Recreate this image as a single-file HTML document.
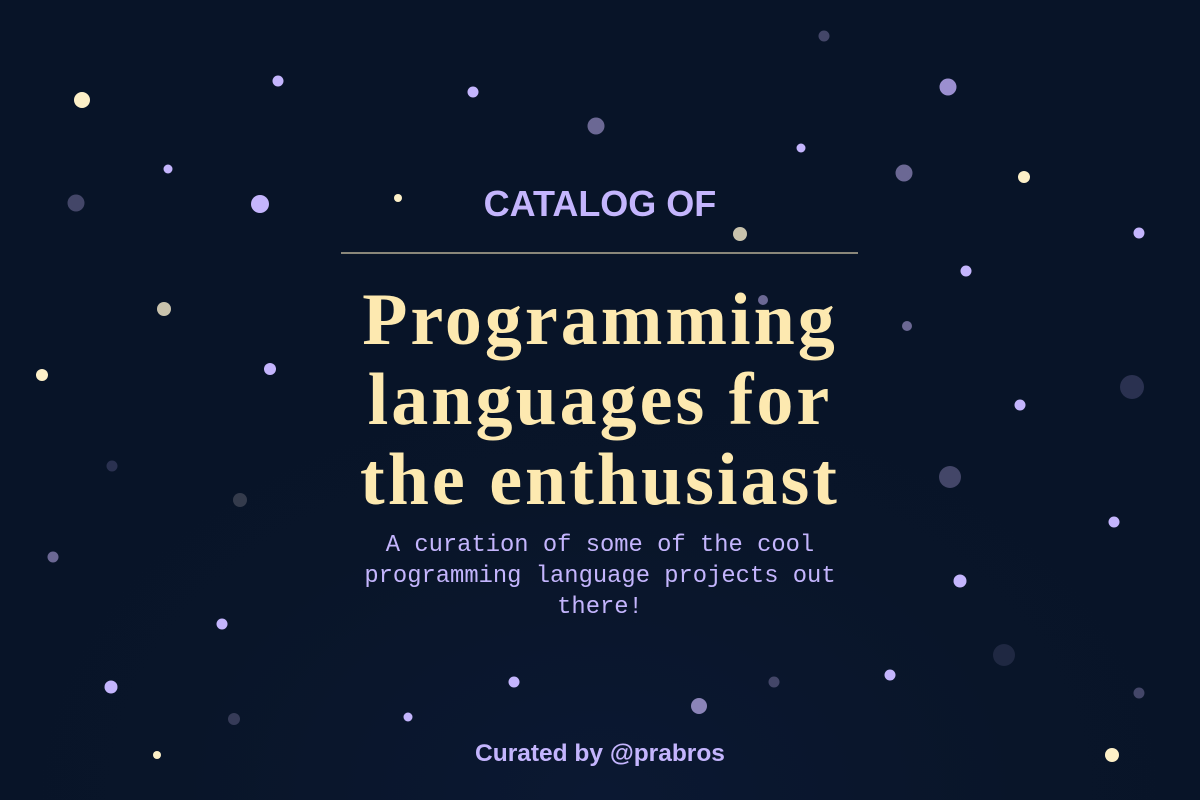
<!DOCTYPE html>
<html><head><meta charset="utf-8"><style>
html,body{margin:0;padding:0}
body{width:1200px;height:800px;overflow:hidden;position:relative;background:radial-gradient(ellipse 700px 500px at 600px 800px,#0b1832 0%,#091529 60%,#081428 100%);}
.d{position:absolute;border-radius:50%;transform:translate(-50%,-50%)}
.c{background:#fdf0c8}.l{background:#c4b5fd}.m{background:#9b8fd0}.p{background:#6b6894}.g{background:#434668}.k{background:#2a3150}.t{background:#c9c3ad}
.t1{position:absolute;left:0;width:1200px;top:178px;text-align:center;font:bold 36px "Liberation Sans",sans-serif;color:#c4b5fd;line-height:52px}
.hr{position:absolute;left:341px;width:517px;top:252px;height:2px;background:#8a877a}
h1{position:absolute;left:0;width:1200px;top:280px;margin:0;text-align:center;font:bold 74px/80px "Liberation Serif",serif;letter-spacing:3px;color:#fde9b0}
.sub{position:absolute;left:330px;width:540px;top:530px;text-align:center;font:23.8px/31px "Liberation Mono",monospace;color:#c4b5fd}
.cur{position:absolute;left:0;width:1200px;top:739px;text-align:center;font:bold 24.5px/30px "Liberation Sans",sans-serif;color:#c4b5fd}
</style></head><body>
<div class="d c" style="left:82px;top:100px;width:16px;height:16px"></div>
<div class="d l" style="left:278px;top:81px;width:11px;height:11px"></div>
<div class="d l" style="left:473px;top:92px;width:11px;height:11px"></div>
<div class="d p" style="left:596px;top:126px;width:17px;height:17px"></div>
<div class="d g" style="left:824px;top:36px;width:11px;height:11px"></div>
<div class="d m" style="left:948px;top:87px;width:17px;height:17px"></div>
<div class="d l" style="left:801px;top:148px;width:9px;height:9px"></div>
<div class="d l" style="left:168px;top:169px;width:9px;height:9px"></div>
<div class="d p" style="left:904px;top:173px;width:17px;height:17px"></div>
<div class="d c" style="left:1024px;top:177px;width:12px;height:12px"></div>
<div class="d g" style="left:76px;top:203px;width:17px;height:17px"></div>
<div class="d l" style="left:260px;top:204px;width:18px;height:18px"></div>
<div class="d c" style="left:398px;top:198px;width:8px;height:8px"></div>
<div class="d t" style="left:740px;top:234px;width:14px;height:14px"></div>
<div class="d l" style="left:1139px;top:233px;width:11px;height:11px"></div>
<div class="d l" style="left:966px;top:271px;width:11px;height:11px"></div>
<div class="d t" style="left:164px;top:309px;width:14px;height:14px"></div>
<div class="d p" style="left:763px;top:300px;width:10px;height:10px"></div>
<div class="d p" style="left:907px;top:326px;width:10px;height:10px"></div>
<div class="d c" style="left:42px;top:375px;width:12px;height:12px"></div>
<div class="d l" style="left:270px;top:369px;width:12px;height:12px"></div>
<div class="d k" style="left:1132px;top:387px;width:24px;height:24px"></div>
<div class="d l" style="left:1020px;top:405px;width:11px;height:11px"></div>
<div class="d k" style="left:112px;top:466px;width:11px;height:11px"></div>
<div class="d k" style="left:240px;top:500px;width:14px;height:14px;background:#343b4c"></div>
<div class="d g" style="left:950px;top:477px;width:22px;height:22px"></div>
<div class="d l" style="left:1114px;top:522px;width:11px;height:11px"></div>
<div class="d p" style="left:53px;top:557px;width:11px;height:11px"></div>
<div class="d l" style="left:960px;top:581px;width:13px;height:13px"></div>
<div class="d l" style="left:222px;top:624px;width:11px;height:11px"></div>
<div class="d k" style="left:1004px;top:655px;width:22px;height:22px;background:#1f2842"></div>
<div class="d l" style="left:111px;top:687px;width:13px;height:13px"></div>
<div class="d l" style="left:514px;top:682px;width:11px;height:11px"></div>
<div class="d g" style="left:774px;top:682px;width:11px;height:11px"></div>
<div class="d l" style="left:890px;top:675px;width:11px;height:11px"></div>
<div class="d g" style="left:1139px;top:693px;width:11px;height:11px"></div>
<div class="d g" style="left:234px;top:719px;width:12px;height:12px;background:#363b58"></div>
<div class="d l" style="left:408px;top:717px;width:9px;height:9px"></div>
<div class="d m" style="left:699px;top:706px;width:16px;height:16px;background:#8b84b8"></div>
<div class="d c" style="left:157px;top:755px;width:8px;height:8px"></div>
<div class="d c" style="left:1112px;top:755px;width:14px;height:14px"></div>
<div class="t1">CATALOG OF</div>
<div class="hr"></div>
<h1>Programming<br>languages for<br>the enthusiast</h1>
<div class="sub">A curation of some of the cool programming language projects out there!</div>
<div class="cur">Curated by @prabros</div>
</body></html>
